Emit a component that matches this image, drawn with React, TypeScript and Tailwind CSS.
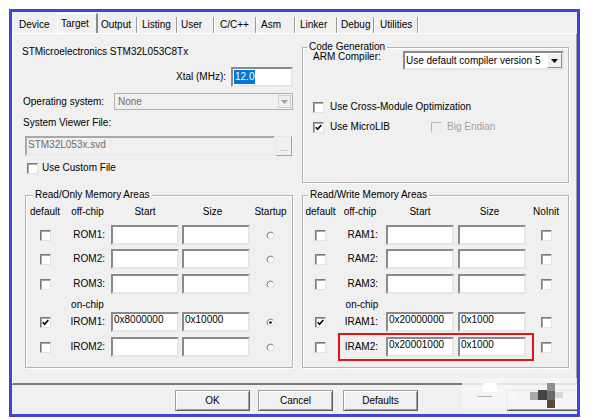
import React from "react";

function Check({ checked = false, disabled = false }: { checked?: boolean; disabled?: boolean }) {
  return (
    <span
      className={
        disabled
          ? "flex w-[11px] h-[11px] shrink-0 items-center justify-center border border-t-[#b8b8b8] border-l-[#b8b8b8] border-r-[#ececec] border-b-[#ececec] bg-[#f0f0f0]"
          : "flex w-[11px] h-[11px] shrink-0 items-center justify-center border border-t-[#7a7a7a] border-l-[#7a7a7a] border-r-[#e3e3e3] border-b-[#e3e3e3] bg-white shadow-[inset_1px_1px_0_#a8a8a8]"
      }
    >
      {checked && (
        <svg width="7" height="7" viewBox="0 0 7 7">
          <path d="M0.7 3.2 L2.6 5.2 L6.3 1.0" fill="none" stroke="#000" strokeWidth="1.6" />
        </svg>
      )}
    </span>
  );
}

function Radio({ on = false }: { on?: boolean }) {
  return (
    <svg width="9" height="9" viewBox="0 0 9 9">
      <circle cx="4.5" cy="4.5" r="3.5" fill="#fff" stroke="#dcdcdc" />
      <path d="M6.97 2.03 A3.5 3.5 0 0 0 2.03 6.97" fill="none" stroke="#7a7a7a" />
      {on && <circle cx="4.5" cy="4.5" r="1.3" fill="#000" />}
    </svg>
  );
}

function Field({ value = "", w }: { value?: string; w: string }) {
  return (
    <div
      className={`${w} h-[20px] shrink-0 overflow-hidden whitespace-nowrap border-2 border-t-[#8a8a8a] border-l-[#8a8a8a] border-r-[#e6e6e6] border-b-[#e6e6e6] bg-white pl-[1px] leading-[12px]`}
    >
      {value}
    </div>
  );
}

function Btn({ label, cls = "" }: { label: string; cls?: string }) {
  return (
    <div
      className={`${cls} flex w-[75px] h-[21px] shrink-0 items-center justify-center border border-t-[#a0a0a0] border-l-[#a0a0a0] border-r-[#5f5f5f] border-b-[#5f5f5f] bg-[#f0f0f0] shadow-[inset_1px_1px_0_#fff,inset_-1px_-1px_0_#a0a0a0]`}
    >
      {label}
    </div>
  );
}

const roCols = "grid grid-cols-[38px_47px_71px_68px_41px] items-center";
const rwCols = "grid grid-cols-[35px_48px_72px_68px_40px] items-center";

function RoRow({
  label,
  start = "",
  size = "",
  checked = false,
  radio = false,
  cls,
}: {
  label: string;
  start?: string;
  size?: string;
  checked?: boolean;
  radio?: boolean;
  cls: string;
}) {
  return (
    <div className={`${roCols} h-[20px] ${cls}`}>
      <div className="flex justify-center">
        <Check checked={checked} />
      </div>
      <div className="pr-[6px] text-right">{label}</div>
      <Field w="w-[68px]" value={start} />
      <Field w="w-[68px]" value={size} />
      <div className="flex justify-center">
        <Radio on={radio} />
      </div>
    </div>
  );
}

function RwRow({
  label,
  start = "",
  size = "",
  checked = false,
  cls,
}: {
  label: string;
  start?: string;
  size?: string;
  checked?: boolean;
  cls: string;
}) {
  return (
    <div className={`${rwCols} h-[20px] ${cls}`}>
      <div className="flex justify-center">
        <Check checked={checked} />
      </div>
      <div className="pr-[8px] text-right">{label}</div>
      <Field w="w-[68px]" value={start} />
      <Field w="w-[68px]" value={size} />
      <div className="flex justify-center">
        <Check />
      </div>
    </div>
  );
}

const tabs: { label: string; cls: string; selected?: boolean }[] = [
  { label: "Device", cls: "w-[43px] pl-[5px]" },
  { label: "Target", cls: "w-[41px]", selected: true },
  { label: "Output", cls: "w-[39px] pl-[3px]" },
  { label: "Listing", cls: "w-[40px] pl-[5px]" },
  { label: "User", cls: "w-[37px] pl-[4px]" },
  { label: "C/C++", cls: "w-[42px] pl-[6px]" },
  { label: "Asm", cls: "w-[39px] pl-[5px]" },
  { label: "Linker", cls: "w-[42px] pl-[5px]" },
  { label: "Debug", cls: "w-[37px] pl-[4px]" },
  { label: "Utilities", cls: "w-[44px] pl-[6px]" },
];

export default function App() {
  return (
    <div className="relative w-[593px] h-[420px] overflow-hidden bg-white pl-[9px] pt-[9px] font-[Liberation_Sans,Arial,sans-serif] text-[10px] leading-[12px] text-black">
      <div className="flex w-[571px] h-[408px] flex-col overflow-hidden border-[3px] border-[#3d47d1] bg-[#f0f0f0]">
        {/* Tab bar */}
        <div className="flex h-[21px] shrink-0 items-end pl-[2px]">
          {tabs.map((t) =>
            t.selected ? (
              <div
                key={t.label}
                className={`${t.cls} h-[20px] border-t border-l border-r-2 border-t-white border-l-white border-r-[#8a8a8a] pl-[3px] pt-[4px]`}
              >
                {t.label}
              </div>
            ) : (
              <div
                key={t.label}
                className={
                  t.label === "Device"
                    ? `${t.cls} flex h-[16px] items-center`
                    : `${t.cls} flex h-[16px] items-center border-r border-r-[#9a9a9a] shadow-[1px_0_0_#fff]`
                }
              >
                {t.label}
              </div>
            )
          )}
        </div>

        {/* Panel */}
        <div className="h-[352px] shrink-0 border-t border-l border-r border-b-2 border-t-white border-l-white border-r-[#a0a0a0] border-b-[#7a7a7a] pl-[9px] pr-[7px]">
          <div className="flex gap-[9px]">
            {/* Left column */}
            <div className="flex w-[271px] shrink-0 flex-col">
              <div className="mt-[12px]">STMicroelectronics STM32L053C8Tx</div>
              <div className="mt-[9px] flex h-[20px] items-center justify-end">
                <span>Xtal (MHz):</span>
                <div className="ml-[5px] h-[20px] w-[62px] border-2 border-t-[#8a8a8a] border-l-[#8a8a8a] border-r-[#e6e6e6] border-b-[#e6e6e6] bg-white pl-[1px] pt-[1px]">
                  <span className="inline-block bg-[#0078d7] px-[1px] leading-[14px] text-white">12.0</span>
                </div>
              </div>
              <div className="mt-[6px] flex h-[17px] items-center">
                <span className="w-[92px] shrink-0 pl-[1px]">Operating system:</span>
                <div className="flex h-[17px] w-[179px] items-center border border-[#b0b0b0] bg-[#f0f0f0] pl-[3px] text-[#6d6d6d]">
                  <span className="flex-1">None</span>
                  <span className="mr-[1px] flex h-[13px] w-[13px] items-center justify-center border border-[#d0d0d0]">
                    <svg width="7" height="4" viewBox="0 0 7 4">
                      <path d="M0 0H7L3.5 4Z" fill="#a0a0a0" />
                    </svg>
                  </span>
                </div>
              </div>
              <div className="mt-[7px] pl-[1px]">System Viewer File:</div>
              <div className="mt-[7px] flex h-[20px] pl-[3px]">
                <div className="h-[20px] w-[250px] border-2 border-t-[#a8a8a8] border-l-[#a8a8a8] border-r-[#ececec] border-b-[#ececec] bg-[#f0f0f0] pl-[1px] leading-[14px] text-[#6d6d6d]">
                  STM32L053x.svd
                </div>
                <div className="ml-[1px] flex h-[20px] w-[16px] items-end justify-center border border-t-[#e8e8e8] border-l-[#e8e8e8] border-r-[#a0a0a0] border-b-[#a0a0a0] pb-[3px] leading-[8px] text-[#a0a0a0]">
                  ...
                </div>
              </div>
              <div className="mt-[6px] flex h-[12px] items-center pl-[5px]">
                <Check />
                <span className="ml-[4px]">Use Custom File</span>
              </div>
            </div>

            {/* Code Generation */}
            <fieldset className="mt-[8px] h-[141px] w-[267px] shrink-0 border border-[#b4b4b4] shadow-[inset_1px_1px_0_#fff,1px_1px_0_#fff]">
              <legend className="ml-[4px] bg-[#f0f0f0] px-[2px] leading-[10px]">Code Generation</legend>
              <div className="-mt-[1px] flex items-start pl-[10px]">
                <span className="w-[90px] shrink-0">ARM Compiler:</span>
                <div className="flex h-[19px] w-[161px] items-center border-2 border-t-[#8a8a8a] border-l-[#8a8a8a] border-r-[#e6e6e6] border-b-[#e6e6e6] bg-white pl-[1px]">
                  <span className="flex-1 whitespace-nowrap">Use default compiler version 5</span>
                  <span className="flex h-[15px] w-[15px] items-center justify-center border border-t-white border-l-white border-r-[#8a8a8a] border-b-[#8a8a8a] bg-[#f0f0f0]">
                    <svg width="7" height="4" viewBox="0 0 7 4">
                      <path d="M0 0H7L3.5 4Z" fill="#000" />
                    </svg>
                  </span>
                </div>
              </div>
              <div className="mt-[31px] flex h-[12px] items-center pl-[10px]">
                <Check />
                <span className="ml-[6px]">Use Cross-Module Optimization</span>
              </div>
              <div className="mt-[8px] flex h-[12px] items-center pl-[10px]">
                <div className="flex w-[118px] shrink-0 items-center">
                  <Check checked />
                  <span className="ml-[6px]">Use MicroLIB</span>
                </div>
                <Check disabled />
                <span className="ml-[5px] text-[#a0a0a0]">Big Endian</span>
              </div>
            </fieldset>
          </div>

          {/* Memory areas */}
          <div className="mt-[7px] flex gap-[9px]">
            <fieldset className="ml-[3px] h-[178px] w-[268px] shrink-0 border border-[#b4b4b4] shadow-[inset_1px_1px_0_#fff,1px_1px_0_#fff]">
              <legend className="ml-[7px] bg-[#f0f0f0] px-[2px] leading-[10px]">Read/Only Memory Areas</legend>
              <div className={`${roCols} mt-[6px] h-[12px]`}>
                <div className="text-center">default</div>
                <div className="text-center">off-chip</div>
                <div className="w-[68px] text-center">Start</div>
                <div className="pr-[7px] text-center">Size</div>
                <div className="text-center">Startup</div>
              </div>
              <RoRow cls="mt-[7px]" label="ROM1:" />
              <RoRow cls="mt-[4px]" label="ROM2:" />
              <RoRow cls="mt-[5px]" label="ROM3:" />
              <div className={`${roCols} mt-[5px] h-[12px]`}>
                <div />
                <div className="text-center">on-chip</div>
              </div>
              <RoRow cls="mt-[1px]" label="IROM1:" start="0x8000000" size="0x10000" checked radio />
              <RoRow cls="mt-[5px]" label="IROM2:" />
            </fieldset>

            <fieldset className="h-[178px] w-[267px] shrink-0 border border-[#b4b4b4] shadow-[inset_1px_1px_0_#fff,1px_1px_0_#fff]">
              <legend className="ml-[5px] bg-[#f0f0f0] px-[2px] leading-[10px]">Read/Write Memory Areas</legend>
              <div className={`${rwCols} mt-[6px] h-[12px]`}>
                <div className="text-center">default</div>
                <div className="pr-[4px] text-center">off-chip</div>
                <div className="w-[68px] text-center">Start</div>
                <div className="pr-[5px] text-center">Size</div>
                <div className="text-center">NoInit</div>
              </div>
              <RwRow cls="mt-[7px]" label="RAM1:" />
              <RwRow cls="mt-[4px]" label="RAM2:" />
              <RwRow cls="mt-[5px]" label="RAM3:" />
              <div className={`${rwCols} mt-[5px] h-[12px]`}>
                <div />
                <div className="text-center">on-chip</div>
              </div>
              <RwRow cls="mt-[1px]" label="IRAM1:" start="0x20000000" size="0x1000" checked />
              <RwRow cls="mt-[5px]" label="IRAM2:" start="0x20001000" size="0x1000" />
            </fieldset>
          </div>
        </div>

        {/* Buttons */}
        <div className="flex pl-[163px] pt-[5px]">
          <Btn label="OK" />
          <Btn cls="ml-[8px]" label="Cancel" />
          <Btn cls="ml-[10px]" label="Defaults" />
          <Btn cls="ml-[89px]" label="" />
        </div>
      </div>

      {/* red highlight annotation */}
      <div className="absolute left-[338px] top-[333px] h-[28px] w-[196px] border-2 border-[#e3121b]" />

      {/* watermark */}
      <div className="absolute left-[462px] top-[378px] h-[31px] w-[115px] bg-[#f6f6f6]/85" />
      <div className="absolute left-[483px] top-[383px] h-[9px] w-[14px] bg-white" />
      <div className="absolute left-[508px] top-[392px] h-[6px] w-[8px] bg-[#fafafa]" />
      <div className="absolute left-[478px] top-[393px] h-[4px] w-[14px] border-b border-[#b0b0b0]" />
      <div className="absolute left-[530px] top-[392px] h-[8px] w-[8px] bg-[#a8a8a8]" />
      <div className="absolute left-[538px] top-[390px] h-[10px] w-[9px] bg-[#444]" />
      <div className="absolute left-[547px] top-[383px] h-[8px] w-[8px] bg-[#909090]" />
      <div className="absolute left-[547px] top-[391px] h-[9px] w-[8px] bg-[#6a6a6a]" />
      <div className="absolute left-[547px] top-[400px] h-[8px] w-[8px] bg-[#554a3a]" />
      <div className="absolute left-[555px] top-[392px] h-[6px] w-[8px] bg-[#d8d8d8]" />
    </div>
  );
}
